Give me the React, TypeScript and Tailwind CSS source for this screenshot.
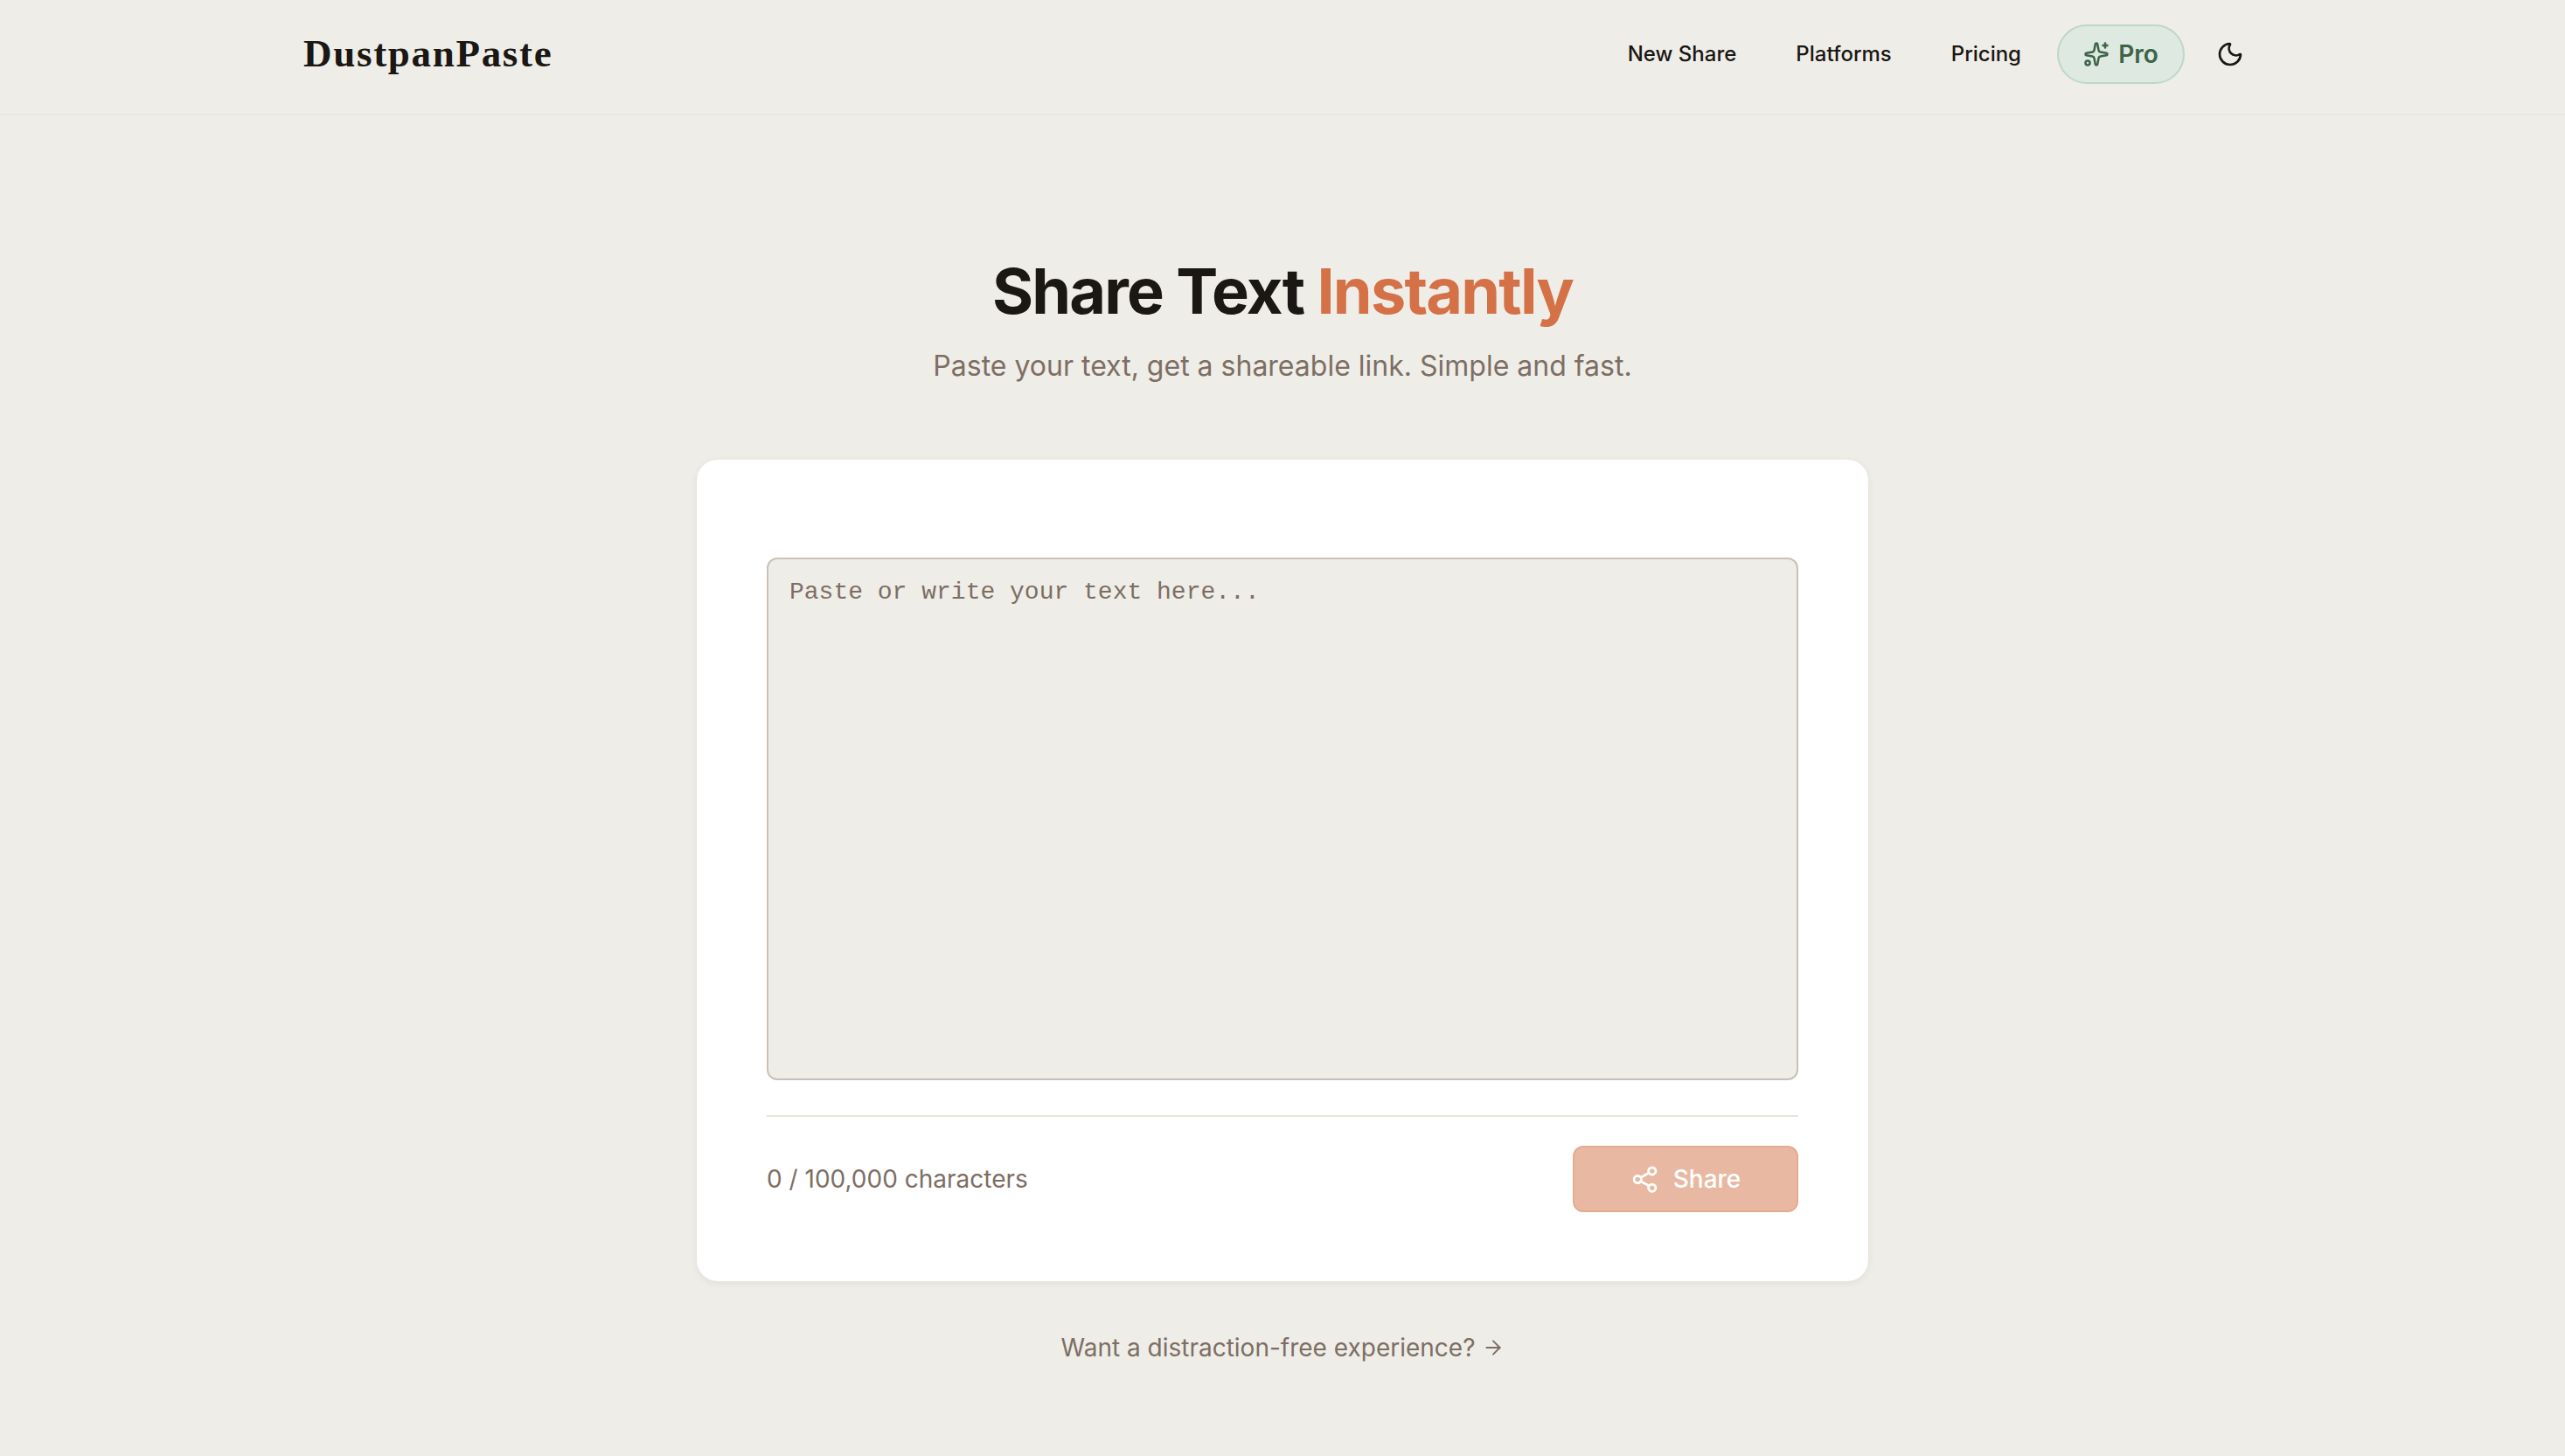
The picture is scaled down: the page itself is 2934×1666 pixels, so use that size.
import { ArrowRight, Moon, Share2, Sparkles } from "lucide-react";

const navLinks = ["New Share", "Platforms", "Pricing"];

export default function App() {
  return (
    <div className="min-h-[1666px] bg-[#efede8] font-['Inter',sans-serif] text-[#1a1714]">
      <header className="h-[132px] border-b-2 border-[#ebe8e3]">
        <div className="mx-auto flex h-[124px] w-[2288px] items-center justify-between px-6">
          <span className="font-['Liberation_Serif',serif] text-[45px] font-bold tracking-[1.7px]">DustpanPaste</span>
          <nav className="flex items-center">
            <div className="mr-[41px] flex items-center gap-[68px]">
              {navLinks.map((link) => (
                <a key={link} className="text-[24px] font-medium">
                  {link}
                </a>
              ))}
            </div>
            <button className="flex h-[68px] w-[146px] items-center justify-center gap-[10px] rounded-full border-2 border-[#bfd6c9] bg-[#dde9e1] text-[28px] font-semibold text-[#3d6349]">
              <Sparkles size={30} strokeWidth={2} />
              Pro
            </button>
            <button className="ml-[36px] mr-[20px] flex items-center">
              <Moon size={32} strokeWidth={2} />
            </button>
          </nav>
        </div>
      </header>

      <main className="flex flex-col items-center">
        <h1 className="mt-[161px] text-[72px] leading-[80px] font-bold tracking-[-1.8px]">
          Share Text <span className="text-[#d47146]">Instantly</span>
        </h1>
        <p className="mt-[22px] text-[32px] leading-[48px] text-[#7d6e64]">
          Paste your text, get a shareable link. Simple and fast.
        </p>

        <section className="mt-[83px] w-[1340px] rounded-[24px] bg-white px-[80px] pt-[112px] pb-[79px] shadow-[0_2px_8px_rgba(60,50,40,0.08)]">
          <textarea
            readOnly
            placeholder="Paste or write your text here..."
            className="block h-[598px] w-full resize-none rounded-[12px] border-2 border-[#c9c1b6] bg-[#efede8] px-[24px] py-[18px] font-['Liberation_Mono',monospace] text-[28px] leading-[40px] outline-none placeholder:text-[#7d6e64]"
          />
          <div className="mt-[40px] flex items-center justify-between border-t-2 border-[#e8e3dd] pt-[33px]">
            <span className="text-[28px] text-[#7d6e64]">0 / 100,000 characters</span>
            <button className="flex h-[76px] w-[258px] items-center justify-center gap-[16px] rounded-[12px] border-2 border-[#e4ab92] bg-[#e8b8a2] text-[28px] font-medium text-white">
              <Share2 size={33} strokeWidth={2} />
              Share
            </button>
          </div>
        </section>

        <a className="mt-[55px] flex items-center gap-[7px] text-[28px] text-[#7d6e64]">
          Want a distraction-free experience?
          <ArrowRight size={26} strokeWidth={1.8} />
        </a>
      </main>
    </div>
  );
}
